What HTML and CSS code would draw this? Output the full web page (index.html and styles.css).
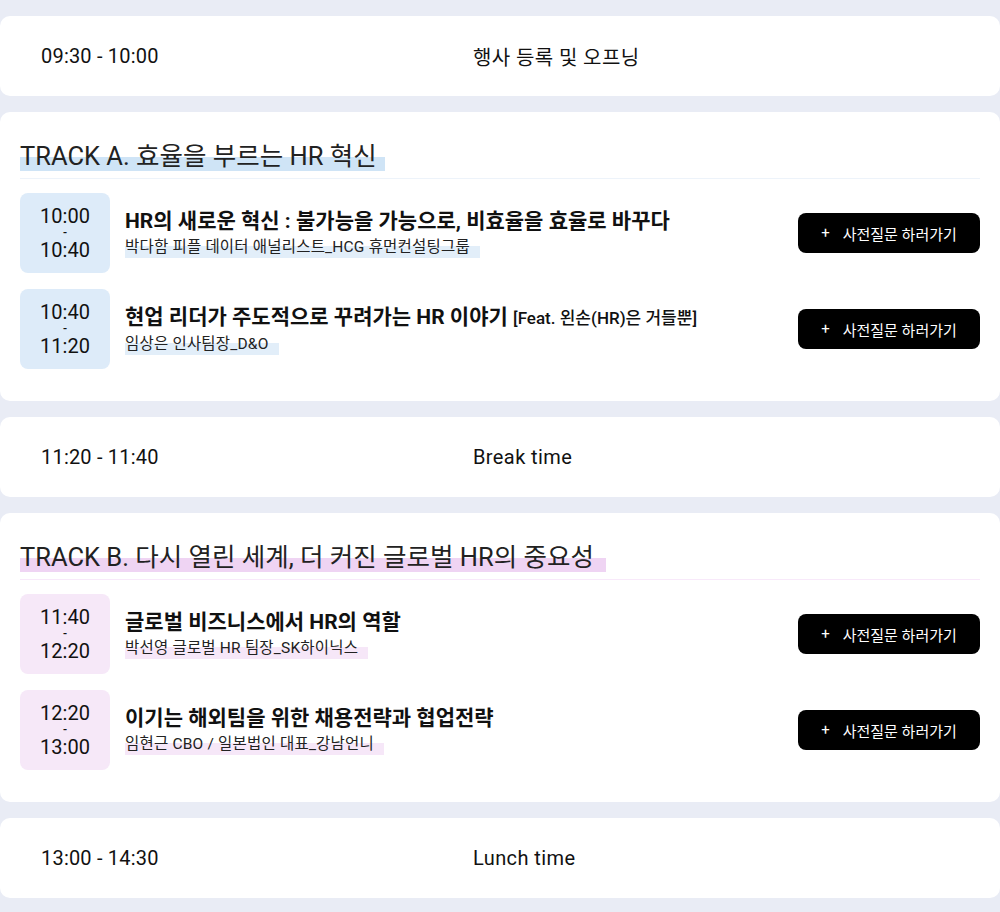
FILE: index.html
```html
<!DOCTYPE html>
<html lang="ko">
<head>
<meta charset="utf-8">
<title>Agenda</title>
<link rel="stylesheet" href="styles.css">
</head>
<body>
<main class="agenda">
  <section class="card simple">
    <div class="simple-time">09:30 - 10:00</div>
    <div class="simple-title">행사 등록 및 오프닝</div>
  </section>

  <section class="card track track-a">
    <div class="track-head"><h2 class="track-title">TRACK A. 효율을 부르는 HR 혁신</h2></div>
    <div class="sessions">
      <div class="session">
        <div class="time-box"><span>10:00</span><span class="dash">-</span><span>10:40</span></div>
        <div class="info">
          <div class="title">HR의 새로운 혁신 : 불가능을 가능으로, 비효율을 효율로 바꾸다</div>
          <div class="speaker"><span class="mark">박다함 피플 데이터 애널리스트_HCG 휴먼컨설팅그룹</span></div>
        </div>
        <a class="btn" href="#"><span class="plus">+</span>사전질문 하러가기</a>
      </div>
      <div class="session">
        <div class="time-box"><span>10:40</span><span class="dash">-</span><span>11:20</span></div>
        <div class="info">
          <div class="title">현업 리더가 주도적으로 꾸려가는 HR 이야기 <small>[Feat. 왼손(HR)은 거들뿐]</small></div>
          <div class="speaker"><span class="mark">임상은 인사팀장_D&amp;O</span></div>
        </div>
        <a class="btn" href="#"><span class="plus">+</span>사전질문 하러가기</a>
      </div>
    </div>
  </section>

  <section class="card simple">
    <div class="simple-time">11:20 - 11:40</div>
    <div class="simple-title">Break time</div>
  </section>

  <section class="card track track-b">
    <div class="track-head"><h2 class="track-title">TRACK B. 다시 열린 세계, 더 커진 글로벌 HR의 중요성</h2></div>
    <div class="sessions">
      <div class="session">
        <div class="time-box"><span>11:40</span><span class="dash">-</span><span>12:20</span></div>
        <div class="info">
          <div class="title">글로벌 비즈니스에서 HR의 역할</div>
          <div class="speaker"><span class="mark">박선영 글로벌 HR 팀장_SK하이닉스</span></div>
        </div>
        <a class="btn" href="#"><span class="plus">+</span>사전질문 하러가기</a>
      </div>
      <div class="session">
        <div class="time-box"><span>12:20</span><span class="dash">-</span><span>13:00</span></div>
        <div class="info">
          <div class="title">이기는 해외팀을 위한 채용전략과 협업전략</div>
          <div class="speaker"><span class="mark">임현근 CBO / 일본법인 대표_강남언니</span></div>
        </div>
        <a class="btn" href="#"><span class="plus">+</span>사전질문 하러가기</a>
      </div>
    </div>
  </section>

  <section class="card simple">
    <div class="simple-time">13:00 - 14:30</div>
    <div class="simple-title">Lunch time</div>
  </section>
</main>
</body>
</html>
```

FILE: styles.css
```css
* { box-sizing: border-box; }
html, body { margin: 0; padding: 0; }
body {
  background: #e9ecf5;
  font-family: Roboto, "Noto Sans CJK KR", sans-serif;
  color: #111;
}
.agenda {
  display: flex;
  flex-direction: column;
  gap: 16px;
  padding: 16px 0 14px;
}
.card {
  background: #fff;
  border-radius: 10px;
}
.simple {
  height: 80px;
  display: flex;
  align-items: center;
  padding: 0 41px;
  font-size: 20px;
  letter-spacing: 0.2px;
}
.simple-time { width: 432px; }
.simple-title { letter-spacing: 0.4px; }

.track { padding: 28px 20px 32px; height: 289px; }
.track-head {
  padding-bottom: 6px;
  border-bottom: 1px solid #edf3fa;
  margin-bottom: 14px;
}
.track-b .track-head { border-bottom-color: #f8e9fa; }
.track-title {
  display: inline-block;
  margin: 0;
  font-size: 25.5px;
  font-weight: 400;
  line-height: 32px;
  color: #222;
  padding-right: 8px;
  background: linear-gradient(to bottom, transparent 52%, #cfe4f6 52%, #cfe4f6 96%, transparent 96%);
}
.track-b .track-title {
  padding-right: 12px;
  background: linear-gradient(to bottom, transparent 52%, #efd4f3 52%, #efd4f3 96%, transparent 96%);
}
.sessions { display: flex; flex-direction: column; gap: 16px; }
.session { display: flex; align-items: center; }
.time-box {
  width: 90px;
  height: 80px;
  border-radius: 8px;
  background: #ddebf9;
  display: flex;
  flex-direction: column;
  align-items: center;
  justify-content: center;
  font-size: 20px;
  line-height: 20px;
  color: #111;
  flex: none;
}
.track-b .time-box { background: #f6e8f8; }
.time-box .dash { font-size: 12px; line-height: 14px; font-weight: 500; }
.info { flex: 1; margin-left: 15px; }
.title {
  font-size: 21px;
  font-weight: 700;
  line-height: 26px;
  color: #111;
}
.title small { font-size: 17px; font-weight: 500; }
.speaker {
  font-size: 15.5px;
  letter-spacing: 0.2px;
  line-height: 22px;
  color: #222;
  margin-top: 2px;
}
.mark {
  display: inline-block;
  padding-right: 10px;
  background: linear-gradient(to bottom, transparent 45%, #e2eef9 45%, #e2eef9 100%);
}
.track-b .mark {
  background: linear-gradient(to bottom, transparent 45%, #f6e7f8 45%, #f6e7f8 100%);
}
.btn {
  flex: none;
  width: 182px;
  height: 40px;
  border-radius: 8px;
  background: #000;
  color: #fff;
  text-decoration: none;
  font-size: 15px;
  display: flex;
  align-items: center;
  justify-content: center;
}
.plus { margin-right: 13px; }
```
